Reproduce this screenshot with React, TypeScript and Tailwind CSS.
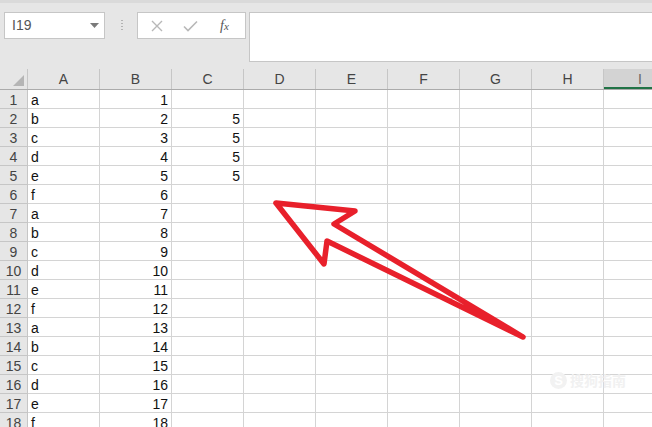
const letters = ["a", "b", "c", "d", "e", "f"];
const columns = ["A", "B", "C", "D", "E", "F", "G", "H", "I"];

const rows = Array.from({ length: 18 }, (_, i) => ({
  n: i + 1,
  a: letters[i % 6],
  b: String(i + 1),
  c: i >= 1 && i <= 4 ? "5" : "",
}));

function FormulaBar() {
  return (
    <div className="flex h-[69px] border-t-[3px] border-[#dadada] pt-[9px]">
      <div className="ml-[4px] flex h-[27px] w-[101px] items-center justify-between border border-[#c6c6c6] bg-white pl-[7px] pr-[5px]">
        <span className="text-[14px] text-[#555]">I19</span>
        <svg width="9" height="5" viewBox="0 0 9 5">
          <path d="M0 0h9L4.5 5z" fill="#7a7a7a" />
        </svg>
      </div>
      <div className="ml-[16px] flex flex-col gap-[2px] pt-[8px]">
        {[0, 1, 2, 3].map((d) => (
          <div key={d} className="h-[1px] w-[2px] bg-[#b3b3b3]" />
        ))}
      </div>
      <div className="ml-[14px] flex h-[27px] w-[109px] items-center border border-[#c6c6c6] bg-white">
        <svg className="ml-[13px]" width="12" height="12" viewBox="0 0 12 12">
          <path d="M1 1l10 10M11 1L1 11" stroke="#b8b8b8" strokeWidth="1.4" />
        </svg>
        <svg className="ml-[20px]" width="15" height="12" viewBox="0 0 15 12">
          <path d="M1 6.5l4 4L14 1.5" stroke="#b8b8b8" strokeWidth="1.6" fill="none" />
        </svg>
        <span className="ml-[22px] font-['Liberation_Serif'] text-[14px] italic text-[#555]">
          f<span className="text-[11px]">x</span>
        </span>
      </div>
      <div className="ml-[3px] h-[50px] flex-1 border-y border-l border-[#c6c6c6] bg-white" />
    </div>
  );
}

function Cell({ children, align = "left" }: { children?: string; align?: "left" | "right" }) {
  return (
    <div
      className={`h-[19px] w-[72px] shrink-0 border-b border-r border-[#d4d4d4] bg-white px-[3px] pt-px text-[14px] leading-[18px] text-[#111] ${
        align === "right" ? "text-right" : "text-left"
      }`}
    >
      {children}
    </div>
  );
}

export default function App() {
  return (
    <div className="relative h-[427px] w-[652px] overflow-hidden bg-[#e6e6e6] font-['Liberation_Sans',sans-serif]">
      <FormulaBar />

      {/* column headers */}
      <div className="flex h-[21px] border-b border-[#ababab]">
        <div className="relative h-[20px] w-[28px] shrink-0 border-r border-[#c6c6c6]">
          <svg className="absolute bottom-[3px] right-[3px]" width="11" height="11" viewBox="0 0 11 11">
            <path d="M11 0v11H0z" fill="#b5b5b5" />
          </svg>
        </div>
        {columns.map((c) => (
          <div
            key={c}
            className={
              c === "I"
                ? "h-[20px] w-[72px] shrink-0 border-b-2 border-[#217346] bg-[#d3d3d3] pt-px text-center text-[14px] leading-[19px] text-[#666]"
                : "h-[20px] w-[72px] shrink-0 border-r border-[#c6c6c6] pt-px text-center text-[14px] leading-[19px] text-[#444]"
            }
          >
            {c}
          </div>
        ))}
      </div>

      {/* grid */}
      {rows.map((r) => (
        <div key={r.n} className="flex">
          <div className="h-[19px] w-[28px] shrink-0 border-b border-r border-[#c6c6c6] pt-px text-center text-[14px] leading-[18px] text-[#444]">
            {r.n}
          </div>
          <Cell>{r.a}</Cell>
          <Cell align="right">{r.b}</Cell>
          <Cell align="right">{r.c}</Cell>
          <Cell />
          <Cell />
          <Cell />
          <Cell />
          <Cell />
          <div className="h-[19px] flex-1 border-b border-[#d4d4d4] bg-white" />
        </div>
      ))}

      {/* red arrow annotation */}
      <svg className="absolute left-0 top-0" width="652" height="427" viewBox="0 0 652 427">
        <path
          d="M276 203L355 211L334 224L523 337L327 241L324 264Z"
          fill="none"
          stroke="#e8202b"
          strokeWidth="5.5"
          strokeLinejoin="round"
          strokeLinecap="round"
        />
      </svg>

      {/* faint watermark */}
      <div className="absolute left-[550px] top-[370px] flex items-center gap-[3px] text-[#f1f1f1]">
        <div className="flex h-[17px] w-[17px] items-center justify-center rounded-full bg-[#f2f2f2] text-[13px] font-bold text-white">
          S
        </div>
        <span className="font-['Noto_Sans_CJK_SC',sans-serif] text-[14px] font-bold">搜狗指南</span>
      </div>
    </div>
  );
}
